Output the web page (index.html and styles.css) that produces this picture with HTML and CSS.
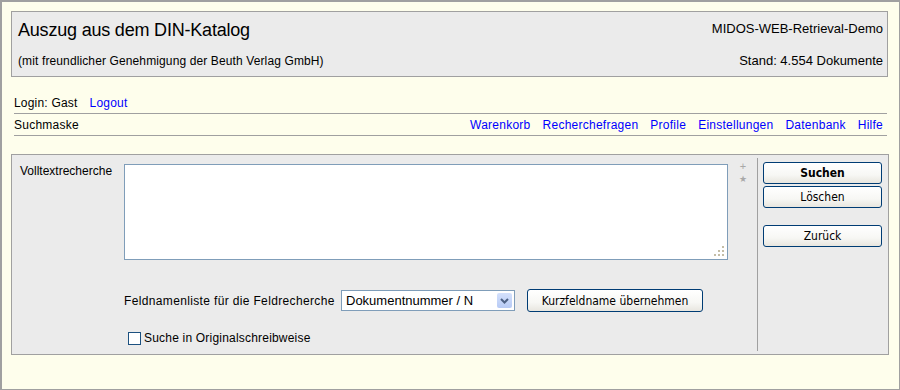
FILE: index.html
```html
<!DOCTYPE html>
<html lang="de">
<head>
  <meta charset="UTF-8" />
  <title>Auszug aus dem DIN-Katalog</title>
  <link rel="stylesheet" href="styles.css">
</head>
<body>
  <div class="page">
    <div class="head">
      <div class="head-left">
        <h1>Auszug aus dem DIN-Katalog</h1>
        <p class="note">(mit freundlicher Genehmigung der Beuth Verlag GmbH)</p>
      </div>
      <div class="head-right">
        <p>MIDOS-WEB-Retrieval-Demo</p>
        <p class="count">Stand: 4.554 Dokumente</p>
      </div>
    </div>

    <div class="login">Login: Gast<a href="#">Logout</a></div>

    <div class="nav">
      <span>Suchmaske</span>
      <div class="nav-links">
        <a href="#">Warenkorb</a>
        <a href="#">Recherchefragen</a>
        <a href="#">Profile</a>
        <a href="#">Einstellungen</a>
        <a href="#">Datenbank</a>
        <a href="#">Hilfe</a>
      </div>
    </div>

    <!-- Suchmaske -->
    <form class="panel">
      <div class="panel-main">
        <div class="row-text">
          <label class="label" for="volltext">Volltextrecherche</label>
          <div class="text-wrap">
            <textarea id="volltext"></textarea>
            <svg class="grip" width="11" height="11" viewBox="0 0 11 11">
              <rect x="8" y="0" width="2" height="2" />
              <rect x="4" y="4" width="2" height="2" />
              <rect x="8" y="4" width="2" height="2" />
              <rect x="0" y="8" width="2" height="2" />
              <rect x="4" y="8" width="2" height="2" />
              <rect x="8" y="8" width="2" height="2" />
            </svg>
          </div>
          <div class="marks">
            <span class="plus">+</span>
            <span class="star">&#9733;</span>
          </div>
        </div>

        <div class="row-fields">
          <span class="fields-label">Feldnamenliste für die Feldrecherche</span>
          <div class="select-box">
            <select>
              <option>Dokumentnummer / N</option>
            </select>
            <span class="select-arrow">
              <svg width="15" height="15" viewBox="0 0 15 15">
                <path d="M4 6 L7.5 9.5 L11 6" fill="none" stroke="#4d6185" stroke-width="2" />
              </svg>
            </span>
          </div>
          <button type="button" class="btn btn-wide">Kurzfeldname übernehmen</button>
        </div>

        <div class="row-check">
          <input type="checkbox" id="orig" />
          <label for="orig">Suche in Originalschreibweise</label>
        </div>
      </div>

      <div class="divider"></div>

      <div class="panel-side">
        <button type="submit" class="btn btn-main">Suchen</button>
        <button type="reset" class="btn">Löschen</button>
        <button type="button" class="btn btn-back">Zurück</button>
      </div>
    </form>
  </div>
</body>
</html>
```

FILE: styles.css
```css
html, body {
  margin: 0;
  padding: 0;
}

body {
  font-family: "Liberation Sans", Arial, sans-serif;
  font-size: 12px;
  color: #000;
  background: #fefeec;
}

.page {
  width: 900px;
  height: 390px;
  box-sizing: border-box;
  border: solid #a0a0a0;
  border-width: 2px 1px 1px 2px;
  padding: 9px 11px 0 9px;
  background: #fefeec;
}

.head {
  height: 66px;
  box-sizing: border-box;
  border: 1px solid #a0a0a0;
  background: #ebebeb;
  display: flex;
  justify-content: space-between;
}

.head-left {
  padding: 7px 0 0 6px;
}

h1 {
  margin: 0;
  font-size: 18px;
  line-height: 22px;
  font-weight: normal;
  letter-spacing: -0.2px;
}

.note {
  margin: 12px 0 0 0;
  line-height: 16px;
  letter-spacing: 0.12px;
}

.head-right {
  padding: 9px 4px 0 0;
  text-align: right;
}

.head-right p {
  margin: 0;
  font-size: 13px;
  line-height: 16px;
}

.head-right .count {
  margin-top: 16px;
}

a {
  color: #0000ff;
  text-decoration: none;
}

.login {
  margin: 18px 1px 0 3px;
  padding: 0 0 2px 0;
  line-height: 16px;
  letter-spacing: 0.2px;
  border-bottom: 1px solid #a0a0a0;
}

.login a {
  margin-left: 12px;
}

.nav {
  margin: 0 1px 0 3px;
  padding: 3px 0 2px 0;
  line-height: 16px;
  letter-spacing: 0.25px;
  border-bottom: 1px solid #a0a0a0;
  display: flex;
  justify-content: space-between;
}

.nav-links {
  display: flex;
  gap: 12px;
  padding-right: 4px;
}

.panel {
  margin: 18px -1px 0 0;
  height: 201px;
  box-sizing: border-box;
  border: 1px solid #a0a0a0;
  background: #ebebeb;
  display: flex;
}

.panel-main {
  flex: 1;
  padding: 9px 0 0 8px;
}

.divider {
  width: 1px;
  margin: 3px 0;
  background: #a0a0a0;
}

.panel-side {
  width: 130px;
  box-sizing: border-box;
  padding: 7px 6px 0 5px;
  display: flex;
  flex-direction: column;
  gap: 2px;
}

.row-text {
  display: flex;
  align-items: flex-start;
}

.label {
  width: 104px;
  line-height: 16px;
  margin-top: -1px;
}

.text-wrap {
  position: relative;
  width: 604px;
  height: 96px;
}

textarea {
  display: block;
  width: 100%;
  height: 100%;
  box-sizing: border-box;
  margin: 0;
  border: 1px solid #7f9db9;
  background: #fff;
  resize: none;
  outline: none;
  font-family: "Liberation Sans", Arial, sans-serif;
  font-size: 13px;
}

.grip {
  position: absolute;
  right: 3px;
  bottom: 3px;
  fill: #c4bda6;
}

.marks {
  margin-left: 11px;
  display: flex;
  flex-direction: column;
  align-items: center;
  color: #a8a8a8;
  width: 8px;
}

.plus {
  font-size: 11px;
  line-height: 10px;
  margin-top: -3px;
}

.star {
  font-family: "DejaVu Sans", sans-serif;
  font-size: 9px;
  line-height: 12px;
  margin-top: 2px;
}

.row-fields {
  margin: 29px 0 0 104px;
  display: flex;
  align-items: center;
}

.fields-label {
  letter-spacing: 0.35px;
  width: 217px;
}

.select-box {
  width: 174px;
  height: 21px;
  box-sizing: border-box;
  border: 1px solid #7f9db9;
  background: #fff;
  display: flex;
  align-items: center;
  padding: 1px;
}

.select-box select {
  flex: 1;
  -webkit-appearance: none;
  appearance: none;
  border: none;
  outline: none;
  background: transparent;
  font-family: "Liberation Sans", Arial, sans-serif;
  font-size: 13px;
  padding: 0 0 0 3px;
  margin: 0;
  height: 17px;
  color: #000;
}

.select-arrow {
  width: 15px;
  height: 15px;
  margin-right: 1px;
  border-radius: 2px;
  background: linear-gradient(to bottom, #d4e1fc, #b7caf5);
  display: flex;
}

.btn {
  height: 22px;
  box-sizing: border-box;
  border: 1px solid #003c74;
  border-radius: 3px;
  background: linear-gradient(to bottom, #ffffff 0%, #f7f7f4 60%, #e8e6df 100%);
  font-family: "DejaVu Sans Condensed", "DejaVu Sans", sans-serif;
  font-size: 12px;
  color: #000;
  padding: 0;
  margin: 0;
  cursor: pointer;
}

.btn-main {
  font-weight: bold;
}

.btn-back {
  margin-top: 15px;
}

.btn-wide {
  width: 176px;
  height: 23px;
  margin-left: 12px;
}

.row-check {
  margin: 18px 0 0 108px;
  display: flex;
  align-items: center;
}

.row-check input {
  -webkit-appearance: none;
  appearance: none;
  width: 13px;
  height: 13px;
  box-sizing: border-box;
  margin: 0 3px 0 0;
  border: 1px solid #1c5180;
  background: #fff;
}

.row-check label {
  letter-spacing: 0.2px;
  line-height: 16px;
}
```
